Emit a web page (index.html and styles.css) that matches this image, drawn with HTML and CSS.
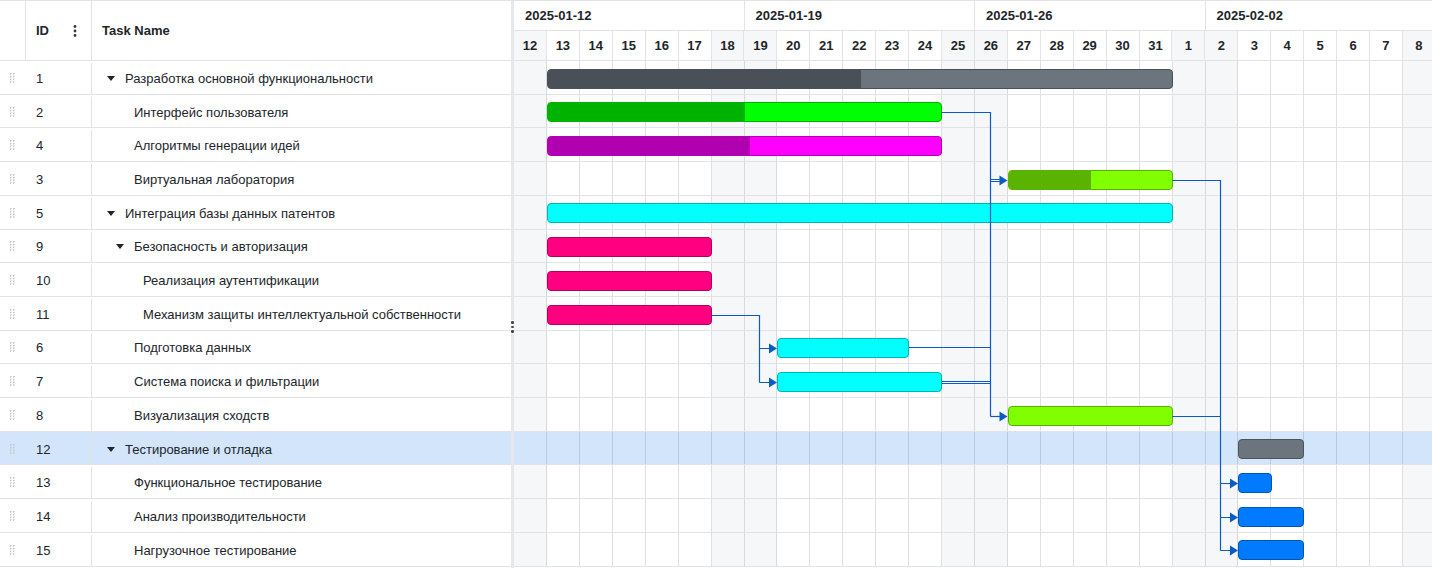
FILE: index.html
```html
<!DOCTYPE html>
<html lang="ru">
<head>
<meta charset="utf-8">
<title>Gantt</title>
<link rel="stylesheet" href="styles.css">
</head>
<body>
<div class="gantt">
  <div class="grid-panel">
    <div class="grid-head">
      <div class="gh-grip"></div>
      <div class="gh-id"><span>ID</span><svg class="kebab" width="4" height="12" viewBox="0 0 4 12"><circle cx="2" cy="1.5" r="1.4"/><circle cx="2" cy="6" r="1.4"/><circle cx="2" cy="10.5" r="1.4"/></svg></div>
      <div class="gh-name">Task Name</div>
    </div>
    <div class="grid-body">
      <div class="row"><span class="grip"></span><span class="cid">1</span><span class="cname lvl0"><span class="cbox"><i class="caret"></i></span>Разработка основной функциональности</span></div>
      <div class="row"><span class="grip"></span><span class="cid">2</span><span class="cname lvl1"><span class="cbox"></span>Интерфейс пользователя</span></div>
      <div class="row"><span class="grip"></span><span class="cid">4</span><span class="cname lvl1"><span class="cbox"></span>Алгоритмы генерации идей</span></div>
      <div class="row"><span class="grip"></span><span class="cid">3</span><span class="cname lvl1"><span class="cbox"></span>Виртуальная лаборатория</span></div>
      <div class="row"><span class="grip"></span><span class="cid">5</span><span class="cname lvl0"><span class="cbox"><i class="caret"></i></span>Интеграция базы данных патентов</span></div>
      <div class="row"><span class="grip"></span><span class="cid">9</span><span class="cname lvl1"><span class="cbox"><i class="caret"></i></span>Безопасность и авторизация</span></div>
      <div class="row"><span class="grip"></span><span class="cid">10</span><span class="cname lvl2"><span class="cbox"></span>Реализация аутентификации</span></div>
      <div class="row"><span class="grip"></span><span class="cid">11</span><span class="cname lvl2"><span class="cbox"></span>Механизм защиты интеллектуальной собственности</span></div>
      <div class="row"><span class="grip"></span><span class="cid">6</span><span class="cname lvl1"><span class="cbox"></span>Подготовка данных</span></div>
      <div class="row"><span class="grip"></span><span class="cid">7</span><span class="cname lvl1"><span class="cbox"></span>Система поиска и фильтрации</span></div>
      <div class="row"><span class="grip"></span><span class="cid">8</span><span class="cname lvl1"><span class="cbox"></span>Визуализация сходств</span></div>
      <div class="row sel"><span class="grip"></span><span class="cid">12</span><span class="cname lvl0"><span class="cbox"><i class="caret"></i></span>Тестирование и отладка</span></div>
      <div class="row"><span class="grip"></span><span class="cid">13</span><span class="cname lvl1"><span class="cbox"></span>Функциональное тестирование</span></div>
      <div class="row"><span class="grip"></span><span class="cid">14</span><span class="cname lvl1"><span class="cbox"></span>Анализ производительности</span></div>
      <div class="row"><span class="grip"></span><span class="cid">15</span><span class="cname lvl1"><span class="cbox"></span>Нагрузочное тестирование</span></div>
    </div>
  </div>
  <div class="splitter"><span class="split-handle"><i></i><i></i><i></i></span></div>
  <div class="chart">
    <div class="chart-head">
      <div class="weeks">
        <div class="week">2025-01-12</div>
        <div class="week">2025-01-19</div>
        <div class="week">2025-01-26</div>
        <div class="week">2025-02-02</div>
      </div>
      <div class="days">
        <div class="day we">12</div><div class="day">13</div><div class="day">14</div><div class="day">15</div><div class="day">16</div><div class="day">17</div><div class="day we">18</div>
        <div class="day we">19</div><div class="day">20</div><div class="day">21</div><div class="day">22</div><div class="day">23</div><div class="day">24</div><div class="day we">25</div>
        <div class="day we">26</div><div class="day">27</div><div class="day">28</div><div class="day">29</div><div class="day">30</div><div class="day">31</div><div class="day we">1</div>
        <div class="day we">2</div><div class="day">3</div><div class="day">4</div><div class="day">5</div><div class="day">6</div><div class="day">7</div><div class="day we">8</div>
      </div>
    </div>
    <div class="chart-body">
      <div class="crow"><div class="bar summary" style="grid-column: 2 / 21"><div class="prog" style="width: 50.2%"></div></div></div>
      <div class="crow"><div class="bar green" style="grid-column: 2 / 14"><div class="prog" style="width: 50.2%"></div></div></div>
      <div class="crow"><div class="bar magenta" style="grid-column: 2 / 14"><div class="prog" style="width: 51.4%"></div></div></div>
      <div class="crow"><div class="bar lime" style="grid-column: 16 / 21"><div class="prog" style="width: 50.8%"></div></div></div>
      <div class="crow"><div class="bar cyan" style="grid-column: 2 / 21"></div></div>
      <div class="crow"><div class="bar pink" style="grid-column: 2 / 7"></div></div>
      <div class="crow"><div class="bar pink" style="grid-column: 2 / 7"></div></div>
      <div class="crow"><div class="bar pink" style="grid-column: 2 / 7"></div></div>
      <div class="crow"><div class="bar cyan" style="grid-column: 9 / 13"></div></div>
      <div class="crow"><div class="bar cyan" style="grid-column: 9 / 14"></div></div>
      <div class="crow"><div class="bar lime solid" style="grid-column: 16 / 21"></div></div>
      <div class="crow sel"><div class="bar gray" style="grid-column: 23 / 25"></div></div>
      <div class="crow"><div class="bar blue" style="grid-column: 23 / 24"></div></div>
      <div class="crow"><div class="bar blue" style="grid-column: 23 / 25"></div></div>
      <div class="crow"><div class="bar blue" style="grid-column: 23 / 25"></div></div>
      <svg class="links" width="922" height="506" viewBox="0 0 922 506">
        <g class="ln">
          <path d="M428 51.5H476.5V355.5"/>
          <path d="M476.5 118.5H486M476.5 120.5H486"/>
          <path d="M476.5 355.5H486"/>
          <path d="M395 286.5H476.5"/>
          <path d="M428 320.5H476.5M428 322.5H476.5"/>
          <path d="M197.5 254.5H245.5V321.5"/>
          <path d="M245.5 287.5H256M245.5 321.5H256"/>
          <path d="M658.5 119.5H706.5V489.5"/>
          <path d="M658.5 355.5H706.5"/>
          <path d="M706.5 422.5H717M706.5 456.5H717M706.5 489.5H717"/>
        </g>
        <g class="ar">
          <polygon points="485.5,114.5 493.5,119.5 485.5,124.5"/>
          <polygon points="485.5,350.5 493.5,355.5 485.5,360.5"/>
          <polygon points="255,282.5 263,287.5 255,292.5"/>
          <polygon points="255,316.5 263,321.5 255,326.5"/>
          <polygon points="716,417.5 724,422.5 716,427.5"/>
          <polygon points="716,451.5 724,456.5 716,461.5"/>
          <polygon points="716,484.5 724,489.5 716,494.5"/>
        </g>
      </svg>
    </div>
  </div>
</div>
</body>
</html>
```

FILE: styles.css
```css
:root {
  --day: 32.93px;
  --line: #e1e3e7;
  --gline: rgba(0, 0, 20, 0.12);
  --we: #f6f7f9;
  --sel: #d3e5fb;
  --text: #212529;
  --row: 33.71px;
}

* { box-sizing: border-box; }

html, body {
  margin: 0;
  padding: 0;
  background: #fff;
}

body {
  font-family: "Liberation Sans", Arial, sans-serif;
  font-size: 13px;
  color: var(--text);
  overflow: hidden;
}

.gantt {
  display: flex;
  width: 1432px;
  height: 568px;
  border-top: 1px solid var(--line);
  overflow: hidden;
}

/* ---------- left grid ---------- */
.grid-panel {
  width: 511px;
  flex: none;
  display: flex;
  flex-direction: column;
}

.grid-head {
  height: 60px;
  display: grid;
  grid-template-columns: 26px 66px 1fr;
  border-bottom: 1px solid var(--line);
  font-weight: 700;
}

.gh-grip { border-right: 1px solid var(--line); }

.gh-id {
  display: flex;
  align-items: center;
  justify-content: space-between;
  padding: 0 14px 0 10px;
  border-right: 1px solid var(--line);
}

.kebab { fill: #343a40; }

.gh-name {
  display: flex;
  align-items: center;
  padding-left: 10px;
}

.row {
  height: var(--row);
  display: grid;
  grid-template-columns: 26px 66px 1fr;
  border-bottom: 1px solid var(--line);
  align-items: stretch;
  padding-top: 2px;
}

.row.sel { background: var(--sel); }

.grip {
  display: flex;
  align-items: center;
  padding-left: 10px;
}

.grip::before {
  content: "";
  width: 6px;
  height: 11px;
  background-image: radial-gradient(circle at 0.75px 0.75px, #c6c9cd 0.75px, transparent 0.95px);
  background-size: 3px 2.75px;
}

.cid {
  display: flex;
  align-items: center;
  padding-left: 10px;
  border-right: 1px solid var(--line);
}

.cname {
  display: flex;
  align-items: center;
  padding-left: 10px;
  white-space: nowrap;
  overflow: hidden;
}

.cname.lvl1 { padding-left: 19px; }
.cname.lvl2 { padding-left: 28px; }

.cbox {
  width: 23px;
  flex: none;
  display: flex;
  align-items: center;
}

.caret {
  display: block;
  margin-left: 5px;
  width: 0;
  height: 0;
  border-left: 4.5px solid transparent;
  border-right: 4.5px solid transparent;
  border-top: 5px solid #212529;
}

/* ---------- splitter ---------- */
.splitter {
  width: 3px;
  flex: none;
  background: #e6e8eb;
  position: relative;
}

.split-handle {
  position: absolute;
  left: -1px;
  top: 319px;
  width: 5px;
  height: 14px;
  background: #fff;
  display: flex;
  flex-direction: column;
  align-items: center;
  justify-content: center;
  gap: 2px;
}

.split-handle i {
  width: 2.4px;
  height: 2.4px;
  background: #444a52;
  border-radius: 1px;
}

/* ---------- chart ---------- */
.chart {
  flex: 1;
  min-width: 0;
  overflow: hidden;
}

.chart-head {
  width: calc(var(--day) * 28);
  border-bottom: 1px solid var(--line);
}

.weeks {
  display: flex;
  height: 30px;
  border-bottom: 1px solid var(--line);
}

.week {
  width: calc(var(--day) * 7);
  flex: none;
  border-right: 1px solid var(--line);
  display: flex;
  align-items: center;
  padding-left: 11px;
  font-weight: 700;
  padding-bottom: 1px;
}

.days {
  display: flex;
  height: 29px;
}

.day {
  width: var(--day);
  flex: none;
  border-right: 1px solid var(--line);
  display: flex;
  align-items: center;
  justify-content: center;
  font-weight: 700;
}

.day.we { background: var(--we); }

.chart-body {
  position: relative;
  width: calc(var(--day) * 28);
}

.crow {
  height: var(--row);
  display: grid;
  grid-template-columns: repeat(28, var(--day));
  align-items: start;
  padding-top: 7.6px;
  border-bottom: 1px solid var(--line);
  background:
    repeating-linear-gradient(90deg, transparent 0 calc(var(--day) - 1px), var(--gline) calc(var(--day) - 1px) var(--day)),
    repeating-linear-gradient(90deg, var(--we) 0 var(--day), #fff var(--day) calc(var(--day) * 6), var(--we) calc(var(--day) * 6) calc(var(--day) * 7));
}

.crow.sel {
  background:
    repeating-linear-gradient(90deg, transparent 0 calc(var(--day) - 1px), var(--gline) calc(var(--day) - 1px) var(--day)),
    var(--sel);
}

.bar {
  height: 20px;
  margin-left: -0.3px;
  margin-right: -0.3px;
  border-radius: 4px;
  border: 1px solid;
  overflow: hidden;
  display: flex;
}

.prog { height: 100%; }

.bar.summary { background: #6c757d; border-color: #4a5058; }
.bar.summary .prog { background: #495057; }

.bar.green { background: #00ff00; border-color: #00b300; }
.bar.green .prog { background: #00b300; }

.bar.magenta { background: #ff00ff; border-color: #b300b3; }
.bar.magenta .prog { background: #b000b0; }

.bar.lime { background: #80ff00; border-color: #5ab300; }
.bar.lime .prog { background: #5ab300; }

.bar.cyan { background: #00ffff; border-color: #00b3b3; }
.bar.pink { background: #ff0080; border-color: #b3005a; }
.bar.gray { background: #6c757d; border-color: #4c5359; }
.bar.blue { background: #007bff; border-color: #0056b3; }

.links {
  position: absolute;
  left: 0;
  top: 0;
  pointer-events: none;
}

.links .ln path {
  fill: none;
  stroke: #0b5bc6;
  stroke-width: 1.2;
}

.links .ar polygon { fill: #0b5bc6; }
```
